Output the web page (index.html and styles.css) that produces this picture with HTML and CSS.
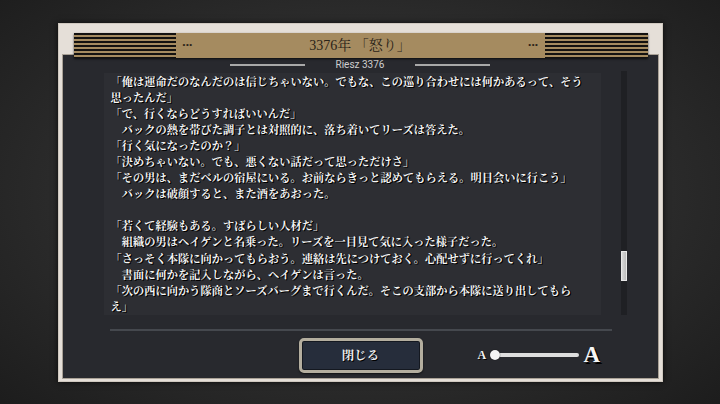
FILE: index.html
```html
<!DOCTYPE html>
<html lang="ja">
<head>
<meta charset="utf-8">
<title>3376年 「怒り」</title>
<link rel="stylesheet" href="styles.css">
</head>
<body>
<div class="dialog">
  <div class="header">
    <div class="stripes"></div>
    <span class="dots">•••</span>
    <h1 class="title">3376年 「怒り」</h1>
    <span class="dots">•••</span>
    <div class="stripes"></div>
  </div>
  <div class="panel">
    <div class="subtitle">
      <span class="rule"></span>
      <span class="sub-text">Riesz 3376</span>
      <span class="rule"></span>
    </div>
    <div class="content">
      <div class="textbox">
        <p>「俺は運命だのなんだのは信じちゃいない。でもな、この巡り合わせには何かあるって、そう思ったんだ」</p>
        <p>「で、行くならどうすればいいんだ」</p>
        <p>　バックの熱を帯びた調子とは対照的に、落ち着いてリーズは答えた。</p>
        <p>「行く気になったのか？」</p>
        <p>「決めちゃいない。でも、悪くない話だって思っただけさ」</p>
        <p>「その男は、まだベルの宿屋にいる。お前ならきっと認めてもらえる。明日会いに行こう」</p>
        <p>　バックは破顔すると、また酒をあおった。</p>
        <p class="gap"></p>
        <p>「若くて経験もある。すばらしい人材だ」</p>
        <p>　組織の男はヘイゲンと名乗った。リーズを一目見て気に入った様子だった。</p>
        <p>「さっそく本隊に向かってもらおう。連絡は先につけておく。心配せずに行ってくれ」</p>
        <p>　書面に何かを記入しながら、ヘイゲンは言った。</p>
        <p>「次の西に向かう隊商とソーズバーグまで行くんだ。そこの支部から本隊に送り出してもらえ」</p>
      </div>
      <div class="scrollbar"><div class="thumb"></div></div>
    </div>
    <div class="separator"></div>
    <div class="controls">
      <button class="close">閉じる</button>
      <div class="slider">
        <span class="a-small">A</span>
        <div class="track"><span class="knob"></span></div>
        <span class="a-large">A</span>
      </div>
    </div>
  </div>
</div>
</body>
</html>
```
FILE: styles.css
```css
* { box-sizing: border-box; }

html, body {
  margin: 0;
  padding: 0;
}

body {
  width: 720px;
  height: 404px;
  overflow: hidden;
  display: flex;
  align-items: center;
  justify-content: center;
  background: radial-gradient(ellipse 75% 80% at 50% 48%, #353535 0%, #2b2b2b 55%, #1a1a1a 100%);
  font-family: "Noto Sans CJK JP", sans-serif;
}

.dialog {
  position: relative;
  width: 605px;
  height: 359px;
  padding: 32px 5px 4px 5px;
  background: #e5dfd8;
  box-shadow: 0 0 6px rgba(0, 0, 0, 0.7), inset 0 0 0 1px #cfc8bf;
}

.header {
  position: absolute;
  left: 16px;
  top: 10px;
  width: 574px;
  height: 25px;
  display: flex;
  align-items: center;
  background: #a58b60;
  box-shadow: 0 1px 2px rgba(0, 0, 0, 0.7);
  z-index: 2;
}

.stripes {
  width: 102px;
  height: 25px;
  background: repeating-linear-gradient(to bottom, #141210 0 1.8px, #a58b60 1.8px 4px);
}

.stripes:last-child { width: 103px; }

.dots {
  font-family: "Liberation Sans", sans-serif;
  font-size: 8px;
  color: #2a2318;
  letter-spacing: 0.6px;
  margin: 0 6px 0 7px;
  line-height: 1;
}

.title {
  flex: 1;
  margin: 0;
  text-align: center;
  font-family: "Liberation Serif", "Noto Serif CJK JP", "Noto Sans CJK JP", serif;
  font-weight: normal;
  font-size: 14px;
  line-height: 25px;
  color: #2a2318;
}

.panel {
  width: 595px;
  height: 323px;
  background: #28292e;
  box-shadow: 0 0 0 1px #a9a196;
  display: flex;
  flex-direction: column;
}

.subtitle {
  height: 18px;
  display: flex;
  align-items: center;
  justify-content: center;
  gap: 31px;
  padding-top: 2px;
}

.rule {
  width: 75px;
  height: 2px;
  background: #a9a9a9;
}

.sub-text {
  font-family: "Roboto", "Liberation Sans", sans-serif;
  font-size: 10px;
  color: #cfcfcf;
  line-height: 12px;
}

.content {
  display: flex;
  align-items: flex-start;
  margin-left: 41px;
}

.textbox {
  width: 497px;
  height: 242px;
  overflow: hidden;
  background: #2d2e33;
  padding: 0 12px 0 7px;
}

.textbox p {
  margin: 0;
  font-family: "Noto Serif CJK JP", "Noto Sans CJK JP", serif;
  font-weight: bold;
  font-size: 11.25px;
  line-height: 16.1px;
  color: #f6f6f6;
  text-spacing-trim: space-all;
  text-shadow: 1px 1px 0 #000, 1px 0 0 #000;
}

.textbox p.gap { height: 16.1px; }

.scrollbar {
  position: relative;
  width: 6px;
  height: 244px;
  margin: -2px 0 0 20px;
  background: #1f2024;
}

.thumb {
  position: absolute;
  left: 0;
  top: 180px;
  width: 6px;
  height: 30px;
  background: linear-gradient(to right, #d8d8d8, #bcbcbc);
  border: 1px solid #e8e8e8;
}

.separator {
  width: 502px;
  height: 2px;
  margin: 14px 0 0 47px;
  background: #45484e;
}

.controls {
  display: flex;
  align-items: center;
  margin-top: 7px;
  padding-left: 236px;
}

.close {
  width: 124px;
  height: 35px;
  border: 3px solid #b4ae9f;
  border-radius: 5px;
  background: #262d3b;
  box-shadow: inset 0 0 0 1px #141820, 0 1px 2px rgba(0, 0, 0, 0.6);
  color: #ececec;
  font-family: "Noto Serif CJK JP", "Noto Sans CJK JP", serif;
  font-weight: bold;
  font-size: 12.5px;
  padding: 0;
  text-shadow: 1px 1px 0 #000;
}

.slider {
  display: flex;
  align-items: center;
  margin-left: 55px;
}

.a-small {
  font-family: "Liberation Serif", serif;
  font-weight: bold;
  font-size: 12px;
  color: #f2f2f2;
  text-shadow: 1px 1px 0 #000;
  width: 10px;
  line-height: 14px;
}

.track {
  position: relative;
  width: 89px;
  height: 10px;
  margin-left: 2px;
  display: flex;
  align-items: center;
  padding-left: 5px;
}

.track::before {
  content: "";
  flex: 1;
  height: 4px;
  border-radius: 2px;
  background: #dedede;
}

.knob {
  position: absolute;
  left: 0;
  top: 0;
  width: 10px;
  height: 10px;
  border-radius: 50%;
  background: #f4f4f4;
  box-shadow: 0 0 1px #000;
}

.a-large {
  font-family: "Liberation Serif", serif;
  font-weight: bold;
  font-size: 23px;
  line-height: 22px;
  color: #f6f6f6;
  text-shadow: 2px 2px 0 #000;
  margin-left: 5px;
}
```
